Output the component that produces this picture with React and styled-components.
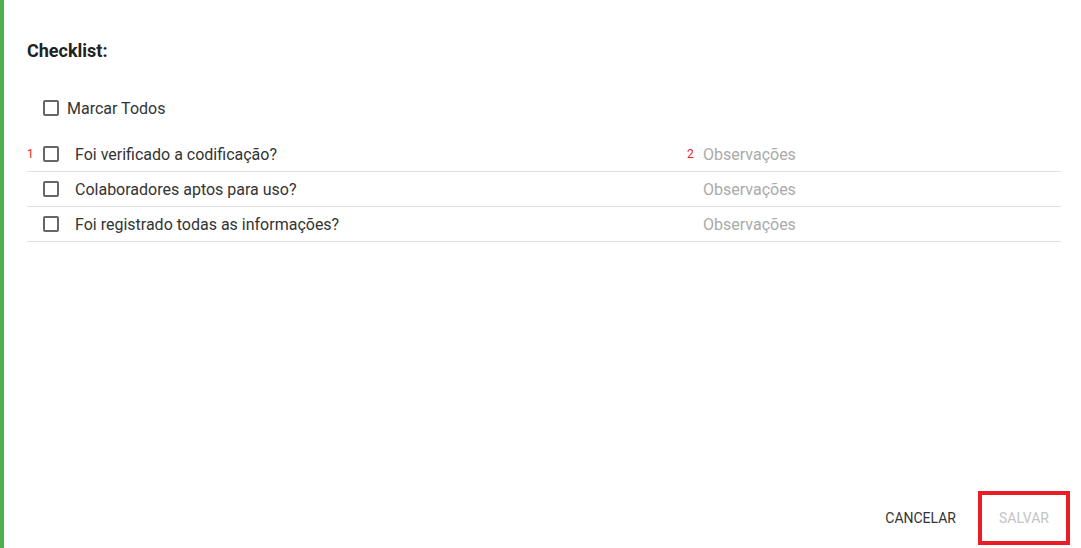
import React, { useState } from "react";
import styled, { createGlobalStyle } from "styled-components";

const GlobalStyle = createGlobalStyle`
  html, body {
    margin: 0;
    padding: 0;
    background: #ffffff;
  }
  body {
    font-family: Roboto, "Liberation Sans", Arial, sans-serif;
  }
`;

const Page = styled.div`
  box-sizing: border-box;
  height: 548px;
  border-left: 4px solid #4caf50;
  padding: 40px 20px 3px 23px;
  display: flex;
  flex-direction: column;
`;

const Title = styled.h2`
  margin: 0;
  font-size: 18px;
  line-height: 22px;
  font-weight: 700;
  color: #222;
`;

const MarkAll = styled.label`
  display: flex;
  align-items: center;
  gap: 8px;
  margin: 34px 0 0 16px;
  height: 24px;
  font-size: 16px;
  color: #333;
  cursor: pointer;
`;

const Box = styled.span`
  box-sizing: border-box;
  width: 16px;
  height: 16px;
  flex: 0 0 16px;
  border: 2px solid #666;
  border-radius: 2px;
  background: ${(p) => (p.checked ? "#666" : "transparent")};
  display: flex;
  align-items: center;
  justify-content: center;
`;

const List = styled.div`
  margin-top: 17px;
  display: flex;
  flex-direction: column;
`;

const Row = styled.div`
  display: flex;
  align-items: center;
  height: 34px;
  border-bottom: 1px solid #e0e0e0;
  font-size: 16px;
`;

const Num = styled.span`
  width: 16px;
  flex: 0 0 16px;
  font-size: 12px;
  color: #f01818;
  box-sizing: border-box;
`;

const Question = styled.span`
  flex: 1;
  margin-left: 16px;
  color: #333;
  cursor: pointer;
`;

const Obs = styled.input`
  width: 358px;
  border: none;
  outline: none;
  padding: 0;
  font-family: inherit;
  font-size: 16px;
  color: #333;
  background: transparent;
  &::placeholder {
    color: #aaa;
  }
`;

const Footer = styled.div`
  margin-top: auto;
  display: flex;
  justify-content: flex-end;
  align-items: center;
  gap: 6px;
  margin-right: -9px;
`;

const Button = styled.button`
  box-sizing: border-box;
  height: ${(p) => (p.marked ? "54px" : "36px")};
  width: ${(p) => (p.marked ? "92px" : "auto")};
  padding: 0 16px;
  border: ${(p) => (p.marked ? "4px solid #ea1c24" : "none")};
  background: transparent;
  font-family: inherit;
  font-size: 14px;
  font-weight: 400;
  text-transform: uppercase;
  color: ${(p) => (p.disabled ? "#c4c4c4" : "#333")};
  cursor: ${(p) => (p.disabled ? "default" : "pointer")};
`;

const Check = () => (
  <svg width="10" height="10" viewBox="0 0 24 24">
    <path d="M4 12l5 5L20 6" stroke="#fff" strokeWidth="4" fill="none" />
  </svg>
);

const questions = [
  "Foi verificado a codificação?",
  "Colaboradores aptos para uso?",
  "Foi registrado todas as informações?",
];

const App = () => {
  const [checked, setChecked] = useState([false, false, false]);

  const allChecked = checked.every(Boolean);

  const toggle = (i) => {
    setChecked(checked.map((c, j) => (j === i ? !c : c)));
  };

  const toggleAll = () => {
    setChecked(checked.map(() => !allChecked));
  };

  return (
    <>
      <GlobalStyle />
      <Page>
        <Title>Checklist:</Title>

        <MarkAll onClick={toggleAll}>
          <Box checked={allChecked}>{allChecked && <Check />}</Box>
          Marcar Todos
        </MarkAll>

        <List>
          {questions.map((q, i) => (
            <Row key={q}>
              <Num>{i === 0 ? "1" : ""}</Num>
              <Box checked={checked[i]} onClick={() => toggle(i)}>
                {checked[i] && <Check />}
              </Box>
              <Question onClick={() => toggle(i)}>{q}</Question>
              <Num>{i === 0 ? "2" : ""}</Num>
              <Obs placeholder="Observações" />
            </Row>
          ))}
        </List>

        <Footer>
          <Button>Cancelar</Button>
          <Button marked disabled>
            Salvar
          </Button>
        </Footer>
      </Page>
    </>
  );
};

export default App;
